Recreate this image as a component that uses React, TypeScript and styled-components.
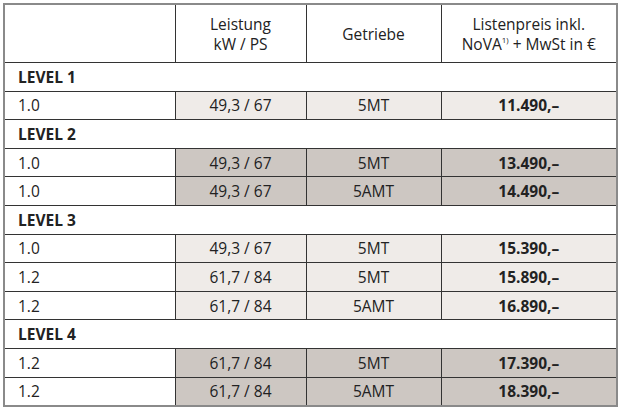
import React from "react";
import styled, { createGlobalStyle } from "styled-components";

const GlobalStyle = createGlobalStyle`
  html, body {
    margin: 0;
    padding: 0;
    background: #ffffff;
  }
  body {
    font-family: "Open Sans", "Liberation Sans", sans-serif;
    color: #222;
  }
`;

type Shade = "light" | "dark";

type Row = { engine: string; power: string; gear: string; price: string };
type Level = { name: string; shade: Shade; rows: Row[] };

const levels: Level[] = [
  {
    name: "LEVEL 1",
    shade: "light",
    rows: [{ engine: "1.0", power: "49,3 / 67", gear: "5MT", price: "11.490,–" }],
  },
  {
    name: "LEVEL 2",
    shade: "dark",
    rows: [
      { engine: "1.0", power: "49,3 / 67", gear: "5MT", price: "13.490,–" },
      { engine: "1.0", power: "49,3 / 67", gear: "5AMT", price: "14.490,–" },
    ],
  },
  {
    name: "LEVEL 3",
    shade: "light",
    rows: [
      { engine: "1.0", power: "49,3 / 67", gear: "5MT", price: "15.390,–" },
      { engine: "1.2", power: "61,7 / 84", gear: "5MT", price: "15.890,–" },
      { engine: "1.2", power: "61,7 / 84", gear: "5AMT", price: "16.890,–" },
    ],
  },
  {
    name: "LEVEL 4",
    shade: "dark",
    rows: [
      { engine: "1.2", power: "61,7 / 84", gear: "5MT", price: "17.390,–" },
      { engine: "1.2", power: "61,7 / 84", gear: "5AMT", price: "18.390,–" },
    ],
  },
];

const Wrap = styled.div`
  padding: 3px 0 0 3px;
`;

const Table = styled.table`
  width: 613px;
  border-collapse: collapse;
  border: 2px solid #8a8a8a;
  table-layout: fixed;
  font-size: 15.5px;
`;

const HeadCell = styled.th`
  height: 57px;
  padding: 0;
  border: 1px solid #333;
  border-top: 2px solid #8a8a8a;
  font-weight: 400;
  text-align: center;
  vertical-align: middle;
  line-height: 20px;
  background: #fff;
`;

const LevelCell = styled.td`
  height: 27.6px;
  padding: 0 0 0 13px;
  border-top: 1px solid #333;
  border-bottom: 1px solid #333;
  font-weight: 700;
  background: #fff;
  vertical-align: middle;
  line-height: 20px;
`;

const EngineCell = styled.td`
  height: 27.6px;
  padding: 0 0 0 13px;
  border: 1px solid #333;
  border-left: 2px solid #8a8a8a;
  background: #fff;
  vertical-align: middle;
  line-height: 20px;
`;

const DataCell = styled.td<{ $shade: Shade; $bold?: boolean }>`
  height: 27.6px;
  padding: 0;
  border: 1px solid #333;
  text-align: center;
  vertical-align: middle;
  line-height: 20px;
  font-weight: ${(p) => (p.$bold ? 700 : 400)};
  background: ${(p) => (p.$shade === "dark" ? "#cdc7c2" : "#efebe8")};
`;

const Sup = styled.sup`
  font-size: 8px;
  vertical-align: top;
  line-height: 1;
  position: relative;
  top: 2px;
`;

export default function App() {
  return (
    <>
      <GlobalStyle />
      <Wrap>
        <Table>
          <colgroup>
            <col style={{ width: 171 }} />
            <col style={{ width: 131 }} />
            <col style={{ width: 135 }} />
            <col style={{ width: 176 }} />
          </colgroup>
          <thead>
            <tr>
              <HeadCell />
              <HeadCell>
                Leistung
                <br />
                kW / PS
              </HeadCell>
              <HeadCell>Getriebe</HeadCell>
              <HeadCell>
                Listenpreis inkl.
                <br />
                NoVA<Sup>1)</Sup> + MwSt in €
              </HeadCell>
            </tr>
          </thead>
          <tbody>
            {levels.map((level) => (
              <React.Fragment key={level.name}>
                <tr>
                  <LevelCell colSpan={4}>{level.name}</LevelCell>
                </tr>
                {level.rows.map((r, i) => (
                  <tr key={i}>
                    <EngineCell>{r.engine}</EngineCell>
                    <DataCell $shade={level.shade}>{r.power}</DataCell>
                    <DataCell $shade={level.shade}>{r.gear}</DataCell>
                    <DataCell $shade={level.shade} $bold>
                      {r.price}
                    </DataCell>
                  </tr>
                ))}
              </React.Fragment>
            ))}
          </tbody>
        </Table>
      </Wrap>
    </>
  );
}
